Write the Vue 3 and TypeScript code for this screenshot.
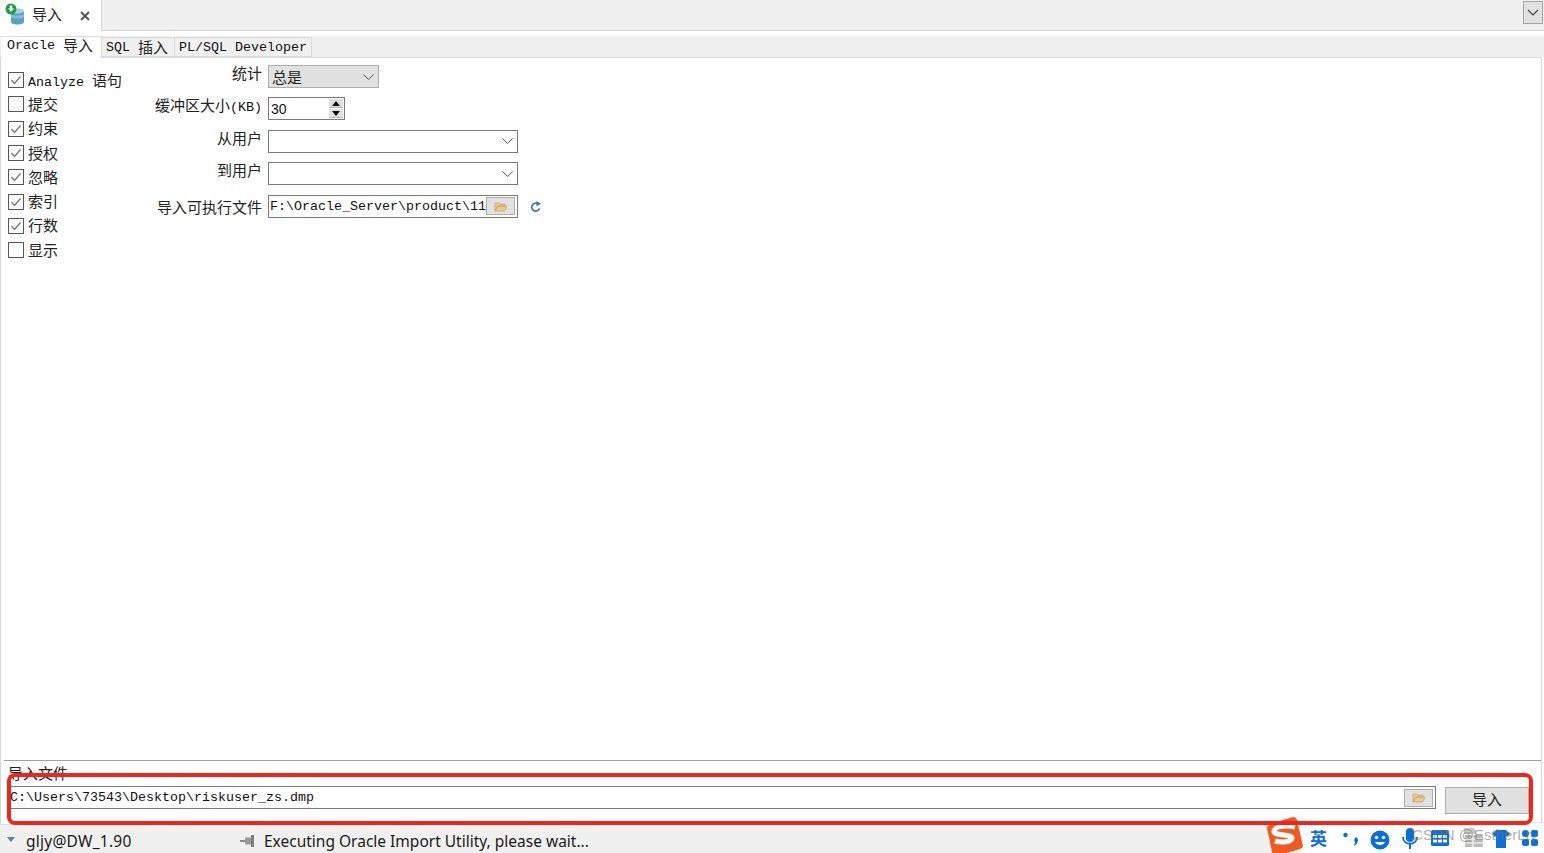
<script setup lang="ts">
interface Opt { en?: string; zh: string; on: boolean }
const opts: Opt[] = [
  { en: 'Analyze ', zh: '语句', on: true },
  { zh: '提交', on: false },
  { zh: '约束', on: true },
  { zh: '授权', on: true },
  { zh: '忽略', on: true },
  { zh: '索引', on: true },
  { zh: '行数', on: true },
  { zh: '显示', on: false }
]
</script>

<template>
  <div class="app">
    <header class="doc-bar">
      <div class="doc-tab">
        <svg class="db-icon" width="20" height="22" viewBox="0 0 20 22">
          <path d="M6 8h13v11c0 1.600-3 2.500-6.500 2.500S6 20.600 6 19z" fill="#5f9fc0" />
          <ellipse cx="12.500" cy="8" rx="6.500" ry="2.500" fill="#a9cfe0" />
          <path d="M6 11c2 2 11 2 13 0v3c-2 2-11 2-13 0z" fill="#86bcd4" />
          <circle cx="6" cy="6" r="5.500" fill="#1f9d45" />
          <path d="M4.800 2.500h2.400v3h1.800L6 9 3 5.500h1.800z" fill="#fff" />
        </svg>
        <span class="zh title">导入</span>
        <svg class="close" width="10" height="10" viewBox="0 0 10 10">
          <path d="M1 1l8 8M9 1L1 9" stroke="#555" stroke-width="2" />
        </svg>
      </div>
      <button class="menu-btn">
        <svg width="12" height="7" viewBox="0 0 12 7"><path d="M1 1l5 5 5-5" fill="none" stroke="#444" stroke-width="1.200" /></svg>
      </button>
    </header>

    <nav class="sub-tabs">
      <div class="sub-tab active">Oracle <span class="zh">导入</span></div>
      <div class="sub-tab sql">SQL <span class="zh">插入</span></div>
      <div class="sub-tab">PL/SQL Developer</div>
    </nav>

    <main class="panel">
      <div class="top-area">
        <ul class="checks">
          <li v-for="o in opts" :key="o.zh" class="check">
            <span class="box">
              <svg v-if="o.on" width="14" height="14" viewBox="0 0 14 14"><path d="M2.500 7l3 3.500 6-7" fill="none" stroke="#777" stroke-width="1.300" /></svg>
            </span>
            <span class="check-label">{{ o.en }}<span class="zh">{{ o.zh }}</span></span>
          </li>
        </ul>

        <div class="form">
          <div class="row">
            <label class="zh lbl">统计</label>
            <div class="select gray"><span class="zh">总是</span><svg class="chev" width="11" height="6" viewBox="0 0 11 6"><path d="M.5.5l5 5 5-5" fill="none" stroke="#555" /></svg></div>
          </div>
          <div class="row">
            <label class="lbl"><span class="zh">缓冲区大小</span>(KB)</label>
            <div class="spin">
              <span class="spin-val">30</span>
              <div class="spin-btns">
                <span class="spin-btn"><i class="up"></i></span>
                <span class="spin-btn"><i class="down"></i></span>
              </div>
            </div>
          </div>
          <div class="row">
            <label class="zh lbl">从用户</label>
            <div class="select wide"><svg class="chev" width="11" height="6" viewBox="0 0 11 6"><path d="M.5.5l5 5 5-5" fill="none" stroke="#555" /></svg></div>
          </div>
          <div class="row">
            <label class="zh lbl">到用户</label>
            <div class="select wide"><svg class="chev" width="11" height="6" viewBox="0 0 11 6"><path d="M.5.5l5 5 5-5" fill="none" stroke="#555" /></svg></div>
          </div>
          <div class="row">
            <label class="zh lbl low">导入可执行文件</label>
            <div class="file wide">
              <span class="file-text">F:\Oracle_Server\product\11</span>
              <span class="browse">
                <svg width="14" height="11" viewBox="0 0 14 11"><path d="M1 10V2h4l1 1h5v2H4L1 10l2.500-5H13l-2.500 5z" fill="#eccb92" stroke="#c9a468" stroke-width=".8" /></svg>
              </span>
            </div>
            <svg class="refresh" width="12" height="12" viewBox="0 0 12 12">
              <path d="M9.500 7.500A4 4 0 1 1 7 2.300" fill="none" stroke="#3b78b4" stroke-width="1.800" />
              <path d="M6.500 0l4.500 2.800-4.500 2.700z" fill="#3b78b4" />
            </svg>
          </div>
        </div>
      </div>

      <section class="bottom">
        <div class="zh bottom-label">导入文件</div>
        <div class="bottom-row">
          <div class="file path">
            <span class="file-text">C:\Users\73543\Desktop\riskuser_zs.dmp</span>
            <span class="browse">
              <svg width="14" height="11" viewBox="0 0 14 11"><path d="M1 10V2h4l1 1h5v2H4L1 10l2.500-5H13l-2.500 5z" fill="#eccb92" stroke="#c9a468" stroke-width=".8" /></svg>
            </span>
          </div>
          <button class="import-btn zh">导入</button>
        </div>
      </section>
    </main>

    <footer class="status">
      <i class="tri"></i>
      <span class="conn">gljy@DW_1.90</span>
      <svg class="pin" width="16" height="12" viewBox="0 0 16 12">
        <path d="M0 5h6v2H0z" fill="#8a8a8a" />
        <path d="M5 2.500h6v7H5z" fill="#9a9a9a" />
        <path d="M11 0h3v12h-3z" fill="#7d7d7d" />
      </svg>
      <span class="msg">Executing Oracle Import Utility, please wait...</span>
    </footer>

    <div class="ime">
      <div class="ime-bg"></div>
      <svg class="ime-logo" width="40" height="38" viewBox="0 0 40 38">
        <path d="M4 8Q16 3 28 0q3 0 4 3l6 26q0 2-3 3-12 4-24 6-3 0-4-3L2 11q0-2 2-3z" fill="#f25a1f" />
        <path d="M30 10c-8-2-20-1-21 4-1 5 18 3 18 7 0 4-10 5-17 3" fill="none" stroke="#fff" stroke-width="5" />
      </svg>
      <span class="ime-zh">英</span>
      <svg class="ime-ic punc" width="16" height="15" viewBox="0 0 16 15">
        <circle cx="2.500" cy="3" r="2.200" fill="#0a6fd8" />
        <path d="M12 6c2-1 3 0 3 2 0 3-2 5-4 6l1-4c-1-1-1-3 0-4z" fill="#0a6fd8" />
      </svg>
      <svg class="ime-ic smile" width="20" height="20" viewBox="0 0 20 20">
        <circle cx="10" cy="10" r="9.500" fill="#0a6fd8" />
        <circle cx="6.500" cy="7.500" r="1.700" fill="#fff" /><circle cx="13.500" cy="7.500" r="1.700" fill="#fff" />
        <path d="M5 12c2 4 8 4 10 0z" fill="#fff" />
      </svg>
      <svg class="ime-ic mic" width="16" height="22" viewBox="0 0 16 22">
        <rect x="4" y="0" width="8" height="14" rx="4" fill="#0a6fd8" />
        <path d="M1 9c0 9 14 9 14 0M8 16v5" fill="none" stroke="#0a6fd8" stroke-width="2" />
      </svg>
      <svg class="ime-ic kb" width="18" height="16" viewBox="0 0 18 16">
        <rect x="0" y="0" width="18" height="16" rx="1.500" fill="#0a6fd8" />
        <path d="M2 5h4v3H2zM7 5h4v3H7zM12 5h4v3h-4zM2 9.500h4v3H2zM7 9.500h4v3H7zM12 9.500h4v3h-4z" fill="#fff" />
      </svg>
      <svg class="ime-ic tool" width="22" height="20" viewBox="0 0 22 20">
        <path d="M2 0h10l2 4v2H2z" fill="#c8c8c8" />
        <rect x="3" y="7" width="18" height="12" rx="1" fill="#bbb" />
        <path d="M3 11h18M3 15h18M11 7v12" stroke="#fff" />
      </svg>
      <svg class="ime-ic shirt" width="18" height="18" viewBox="0 0 18 18">
        <path d="M4 0h10l4 4-3 3-1-1v12H4V6L3 7 0 4z" fill="#0a6fd8" />
      </svg>
      <svg class="ime-ic grid" width="16" height="17" viewBox="0 0 16 17">
        <circle cx="3.500" cy="3.500" r="3.500" fill="#0a6fd8" /><rect x="9" y="0" width="7" height="7" rx="2" fill="#0a6fd8" />
        <rect x="0" y="9" width="7" height="7" rx="2" fill="#0a6fd8" /><rect x="9" y="9" width="7" height="7" rx="2" fill="#0a6fd8" />
      </svg>
      <span class="watermark">CSDN @EstherLty</span>
    </div>

    <div class="red-mark"></div>
  </div>
</template>

<style scoped>
.app {
  position: relative;
  width: 1544px;
  height: 853px;
  overflow: hidden;
  display: flex;
  flex-direction: column;
  background: #fff;
  color: #111;
  font-family: "Liberation Mono", "Noto Sans CJK SC", monospace;
  font-size: 13.33px;
}
.zh {
  font-family: "Noto Sans CJK SC", sans-serif;
  font-size: 15px;
  font-weight: 400;
  color: #222;
}
.doc-bar {
  height: 31px;
  flex: none;
  box-sizing: border-box;
  background: #f0f0f0;
  border-bottom: 1px solid #d4d4d4;
  display: flex;
  justify-content: space-between;
}
.doc-tab {
  width: 102px;
  height: 31px;
  box-sizing: border-box;
  background: #fff;
  border-right: 1px solid #d9d9d9;
  display: flex;
  align-items: center;
  position: relative;
  padding-left: 32px;
}
.db-icon { position: absolute; left: 5px; top: 3px; }
.title { line-height: 28px; margin-bottom: 4px; }
.close { margin-left: 18px; margin-top: 1px; }
.menu-btn {
  width: 20px;
  height: 23px;
  margin: 1px 1px 0 0;
  padding: 0;
  box-sizing: border-box;
  background: #e1e1e1;
  border: 1px solid #a5a5a5;
  display: flex;
  align-items: center;
  justify-content: center;
}
.sub-tabs {
  margin-top: 5px;
  height: 21px;
  flex: none;
  background: #f0f0f0;
  display: flex;
  align-items: flex-end;
  padding-left: 1px;
}
.sub-tab {
  height: 20px;
  box-sizing: border-box;
  padding: 1px 4px 0;
  border: 1px solid #dcdcdc;
  border-left: 0;
  display: flex;
  align-items: center;
  white-space: pre;
  line-height: 18px;
}
.sub-tab .zh { position: relative; top: -1px; }
.sub-tab.sql { padding-right: 6px; }
.sub-tab.active {
  height: 22px;
  margin-bottom: -1px;
  padding: 0 8px 3px 6px;
  background: #fff;
  border: 1px solid #dcdcdc;
  border-bottom: 0;
  border-left: 0;
  position: relative;
}
.panel {
  flex: 1;
  min-height: 0;
  margin-right: 2px;
  display: flex;
  flex-direction: column;
  background: #fff;
  border: 1px solid #d6d6d6;
  border-bottom: 0;
  border-top: 1px solid #dcdcdc;
}
.top-area {
  flex: 1;
  min-height: 0;
  display: flex;
}
.checks {
  list-style: none;
  margin: 0;
  padding: 10px 0 0 7px;
  width: 146px;
  box-sizing: border-box;
  flex: none;
}
.check {
  height: 24.300px;
  display: flex;
  align-items: center;
}
.box {
  width: 16px;
  height: 16px;
  box-sizing: border-box;
  border: 1px solid #555;
  background: #fff;
  display: flex;
  align-items: center;
  justify-content: center;
  margin-right: 4px;
}
.check-label { white-space: pre; position: relative; top: -1px; }
.form {
  padding-top: 7px;
  display: flex;
  flex-direction: column;
}
.row {
  display: flex;
  align-items: center;
  height: 23px;
  margin-bottom: 9.400px;
}
.lbl {
  width: 121px;
  padding-right: 6px;
  box-sizing: border-box;
  text-align: right;
  white-space: pre;
  position: relative;
  top: -4px;
}
.lbl.low { top: 0; }
.select {
  width: 111px;
  height: 23px;
  box-sizing: border-box;
  border: 1px solid #7a7a7a;
  display: flex;
  align-items: center;
  justify-content: space-between;
  padding: 0 4px 0 3px;
  background: #fff;
}
.select.gray {
  background: #e1e1e1;
  border-color: #adadad;
}
.chev { margin-left: auto; }
.wide { width: 250px; }
.spin {
  width: 77px;
  height: 23px;
  box-sizing: border-box;
  border: 1px solid #7a7a7a;
  display: flex;
  justify-content: space-between;
  align-items: center;
  padding: 0 1px 0 2px;
}
.spin-val {
  font-family: "Liberation Sans", sans-serif;
  font-size: 14px;
}
.spin-btns { display: flex; flex-direction: column; gap: 1px; }
.spin-btn {
  width: 14px;
  height: 9px;
  background: #e1e1e1;
  border: 0 solid #b5b5b5;
  border-bottom-width: 1px;
  box-sizing: border-box;
  display: flex;
  align-items: center;
  justify-content: center;
}
.up, .down {
  width: 0;
  height: 0;
  border-left: 4px solid transparent;
  border-right: 4px solid transparent;
}
.up { border-bottom: 5px solid #111; }
.down { border-top: 5px solid #111; }
.file {
  height: 23px;
  box-sizing: border-box;
  border: 1px solid #7a7a7a;
  display: flex;
  align-items: center;
  padding: 0 2px 0 1px;
  background: #fff;
}
.file-text {
  flex: 1;
  min-width: 0;
  overflow: hidden;
  white-space: nowrap;
}
.browse {
  width: 29px;
  height: 18px;
  flex: none;
  box-sizing: border-box;
  background: #e1e1e1;
  border: 1px solid #adadad;
  display: flex;
  align-items: center;
  justify-content: center;
}
.refresh { margin: 2px 0 0 12px; }
.bottom {
  flex: none;
  height: 64px;
  margin: 0 0 0 3px;
  box-sizing: border-box;
  border-top: 1px solid #a0a0a0;
  position: relative;
  padding-left: 4px;
}
.bottom-label {
  line-height: 24px;
  height: 25px;
}
.bottom-row {
  display: flex;
  gap: 9px;
  align-items: flex-start;
}
.path { width: 1428px; }
.import-btn {
  width: 84px;
  height: 27px;
  margin-top: 1px;
  padding: 0 0 4px;
  background: #e1e1e1;
  border: 1px solid #adadad;
}
.status {
  height: 29px;
  flex: none;
  box-sizing: border-box;
  background: #f0f0f0;
  border-top: 1px solid #dcdcdc;
  display: flex;
  align-items: center;
  padding: 4px 0 0 7px;
  font-family: "Noto Sans", sans-serif;
  font-size: 15.500px;
  color: #1a1a1a;
}
.tri {
  width: 0;
  height: 0;
  border-left: 4.500px solid transparent;
  border-right: 4.500px solid transparent;
  border-top: 5px solid #5b7fa8;
  margin-bottom: 4px;
}
.conn { margin-left: 11px; width: 214px; letter-spacing: .25px; }
.pin { flex: none; }
.msg { margin-left: 8px; }
.red-mark {
  position: absolute;
  left: 7px;
  top: 773px;
  width: 1526px;
  height: 52px;
  box-sizing: border-box;
  border: 4px solid #f5231b;
  border-radius: 8px;
}
.ime {
  position: absolute;
  right: 0;
  bottom: 0;
  width: 280px;
  height: 38px;
}
.ime-bg {
  position: absolute;
  left: 20px;
  right: 0;
  bottom: 0;
  height: 30px;
  background: #fff;
  border-top: 1px solid #e3ecf4;
}
.ime-logo { position: absolute; left: 1px; top: 2px; }
.ime-zh {
  position: absolute;
  left: 46px;
  top: 12px;
  font-family: "Noto Sans CJK SC", sans-serif;
  font-size: 17px;
  font-weight: 700;
  line-height: 22px;
  color: #0a6fd8;
}
.ime-ic { position: absolute; }
.punc { left: 79px; top: 17px; }
.smile { left: 106px; top: 15px; }
.mic { left: 138px; top: 13px; }
.kb { left: 167px; top: 15px; }
.tool { left: 198px; top: 13px; }
.shirt { left: 228px; top: 15px; }
.grid { left: 258px; top: 15px; }
.watermark {
  position: absolute;
  left: 148px;
  top: 10px;
  font-family: "Liberation Sans", sans-serif;
  font-size: 15px;
  line-height: 20px;
  color: rgba(120, 120, 120, .6);
  white-space: nowrap;
}
</style>
